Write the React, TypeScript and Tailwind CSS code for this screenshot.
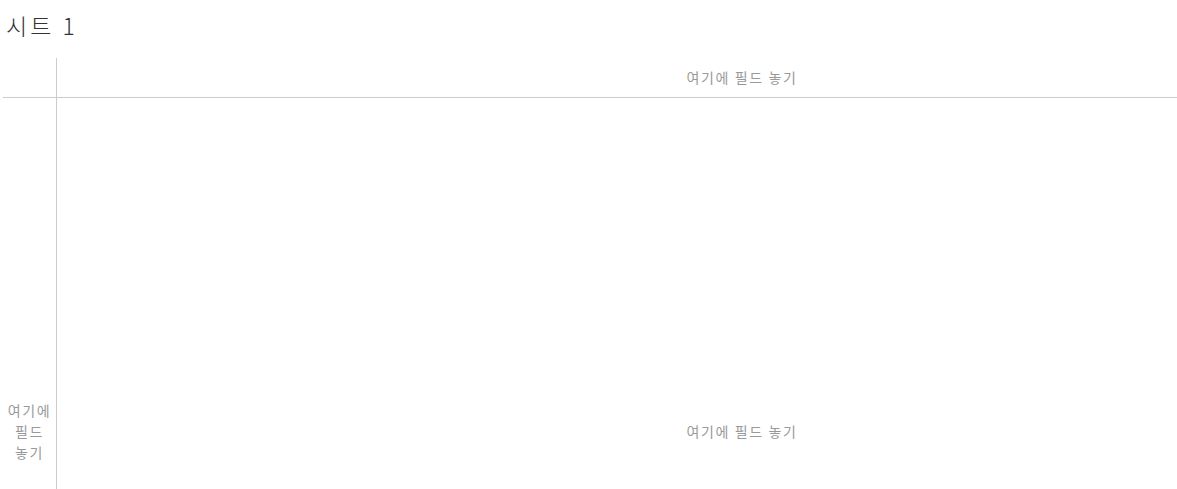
import React from "react";

const font = { fontFamily: '"Noto Sans CJK KR", "Noto Sans", sans-serif' };

export default function App() {
  return (
    <div className="w-[1177px] h-[489px] overflow-hidden bg-white" style={font}>
      <div className="h-[58px] pl-[6px] pt-[10px] text-[23px] leading-[30px] tracking-[3px] font-light text-[#333333]">시트 1</div>
      <div className="ml-[3px] grid grid-cols-[54px_1370px] grid-rows-[40px_666px]">
        <div className="border-r border-b border-[#cccccc]" />
        <div className="border-b border-[#cccccc] flex items-center justify-center text-[14px] tracking-[1.6px] text-[#999999]">
          여기에 필드 놓기
        </div>
        <div className="border-r border-[#cccccc] flex items-center justify-center text-center text-[14px] leading-[21px] tracking-[1.6px] text-[#999999]">
          <div>
            여기에
            <br />
            필드
            <br />
            놓기
          </div>
        </div>
        <div className="flex items-center justify-center text-[14px] tracking-[1.6px] text-[#999999]">
          여기에 필드 놓기
        </div>
      </div>
    </div>
  );
}
